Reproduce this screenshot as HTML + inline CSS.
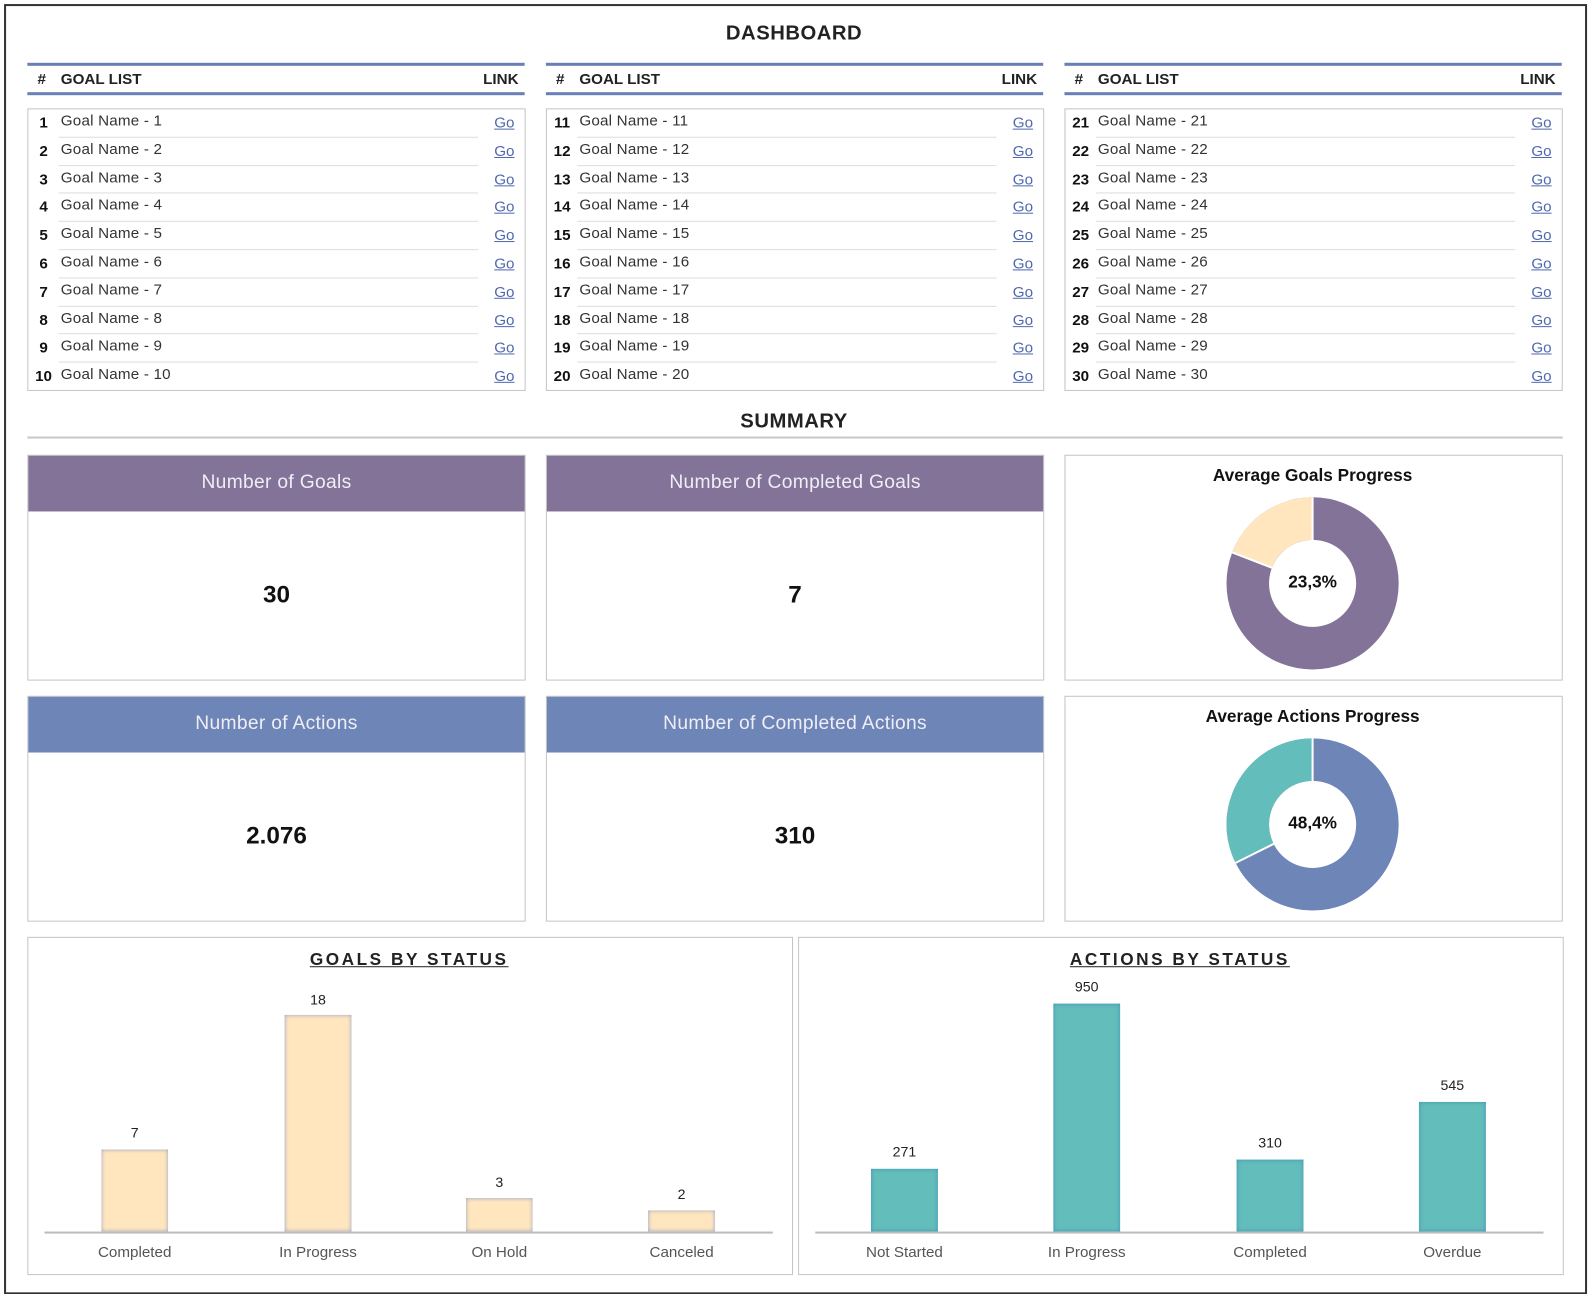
<!DOCTYPE html>
<html><head><meta charset="utf-8">
<style>
html,body{margin:0;padding:0;width:1588px;height:1294px;overflow:hidden;background:#fff;}
#w{position:absolute;left:0;top:0;width:1568px;height:1278px;transform:scale(1.0128);transform-origin:0 0;font-family:"Liberation Sans",sans-serif;color:#222;}
.a{position:absolute;}
.frame{left:4px;top:4px;width:1559px;height:1270px;border:2px solid #333;}
.title{font-weight:bold;font-size:20px;text-align:center;letter-spacing:0.5px;}
.hdr{height:26px;border-top:3px solid #6a7fb5;border-bottom:3px solid #6a7fb5;font-weight:bold;font-size:15px;}
.hdr span{position:absolute;top:5px;}
.tbl{border:1px solid #c4c4c4;height:277px;}
.row{position:absolute;left:0;right:0;height:27.8px;font-size:15px;color:#333;}
.row .n{position:absolute;left:4px;width:22px;text-align:center;font-weight:bold;top:5px;color:#111;}
.row .g{position:absolute;left:32px;top:3px;letter-spacing:0.2px;}
.row .l{position:absolute;right:10px;top:5px;color:#5068b0;text-decoration:underline;}
.row .s{position:absolute;left:30px;right:46px;bottom:0;border-bottom:1px solid #ddd;}
.card{border:1px solid #c4c4c4;height:221px;}
.ch{position:absolute;left:0;right:0;top:0;height:55px;color:#f0eef5;font-size:19px;text-align:center;line-height:54px;letter-spacing:0.3px;}
.cv{position:absolute;left:0;right:0;top:124px;text-align:center;font-weight:bold;font-size:24px;color:#111;}
.box{border:1px solid #c4c4c4;}
.bt{font-weight:bold;font-size:17px;letter-spacing:2.5px;text-decoration:underline;text-align:center;}
.bar{position:absolute;width:66px;box-shadow:inset 0 0 4px #8a9cc8;}
.v{position:absolute;width:80px;text-align:center;font-size:14px;color:#222;}
.x{position:absolute;width:140px;text-align:center;font-size:15px;color:#555;}
</style></head><body><div id="w">
<div class="a frame"></div>
<div class="a title" style="left:0;width:1568px;top:22px;">DASHBOARD</div>

<!-- headers -->
<div class="a hdr" style="left:27px;width:491px;top:62px;"><span style="left:10px">#</span><span style="left:33px">GOAL LIST</span><span style="right:6px">LINK</span></div>
<div class="a hdr" style="left:539px;width:491px;top:62px;"><span style="left:10px">#</span><span style="left:33px">GOAL LIST</span><span style="right:6px">LINK</span></div>
<div class="a hdr" style="left:1051px;width:491px;top:62px;"><span style="left:10px">#</span><span style="left:33px">GOAL LIST</span><span style="right:6px">LINK</span></div>

<div class="a tbl" style="left:27px;width:490px;top:107px;">
<div class="row" style="top:0"><span class="n">1</span><span class="g">Goal Name - 1</span><span class="l">Go</span><span class="s"></span></div>
<div class="row" style="top:27.8px"><span class="n">2</span><span class="g">Goal Name - 2</span><span class="l">Go</span><span class="s"></span></div>
<div class="row" style="top:55.6px"><span class="n">3</span><span class="g">Goal Name - 3</span><span class="l">Go</span><span class="s"></span></div>
<div class="row" style="top:83.4px"><span class="n">4</span><span class="g">Goal Name - 4</span><span class="l">Go</span><span class="s"></span></div>
<div class="row" style="top:111.2px"><span class="n">5</span><span class="g">Goal Name - 5</span><span class="l">Go</span><span class="s"></span></div>
<div class="row" style="top:139px"><span class="n">6</span><span class="g">Goal Name - 6</span><span class="l">Go</span><span class="s"></span></div>
<div class="row" style="top:166.8px"><span class="n">7</span><span class="g">Goal Name - 7</span><span class="l">Go</span><span class="s"></span></div>
<div class="row" style="top:194.6px"><span class="n">8</span><span class="g">Goal Name - 8</span><span class="l">Go</span><span class="s"></span></div>
<div class="row" style="top:222.4px"><span class="n">9</span><span class="g">Goal Name - 9</span><span class="l">Go</span><span class="s"></span></div>
<div class="row" style="top:250.2px"><span class="n">10</span><span class="g">Goal Name - 10</span><span class="l">Go</span></div>
</div>
<div class="a tbl" style="left:539px;width:490px;top:107px;">
<div class="row" style="top:0"><span class="n">11</span><span class="g">Goal Name - 11</span><span class="l">Go</span><span class="s"></span></div>
<div class="row" style="top:27.8px"><span class="n">12</span><span class="g">Goal Name - 12</span><span class="l">Go</span><span class="s"></span></div>
<div class="row" style="top:55.6px"><span class="n">13</span><span class="g">Goal Name - 13</span><span class="l">Go</span><span class="s"></span></div>
<div class="row" style="top:83.4px"><span class="n">14</span><span class="g">Goal Name - 14</span><span class="l">Go</span><span class="s"></span></div>
<div class="row" style="top:111.2px"><span class="n">15</span><span class="g">Goal Name - 15</span><span class="l">Go</span><span class="s"></span></div>
<div class="row" style="top:139px"><span class="n">16</span><span class="g">Goal Name - 16</span><span class="l">Go</span><span class="s"></span></div>
<div class="row" style="top:166.8px"><span class="n">17</span><span class="g">Goal Name - 17</span><span class="l">Go</span><span class="s"></span></div>
<div class="row" style="top:194.6px"><span class="n">18</span><span class="g">Goal Name - 18</span><span class="l">Go</span><span class="s"></span></div>
<div class="row" style="top:222.4px"><span class="n">19</span><span class="g">Goal Name - 19</span><span class="l">Go</span><span class="s"></span></div>
<div class="row" style="top:250.2px"><span class="n">20</span><span class="g">Goal Name - 20</span><span class="l">Go</span></div>
</div>
<div class="a tbl" style="left:1051px;width:490px;top:107px;">
<div class="row" style="top:0"><span class="n">21</span><span class="g">Goal Name - 21</span><span class="l">Go</span><span class="s"></span></div>
<div class="row" style="top:27.8px"><span class="n">22</span><span class="g">Goal Name - 22</span><span class="l">Go</span><span class="s"></span></div>
<div class="row" style="top:55.6px"><span class="n">23</span><span class="g">Goal Name - 23</span><span class="l">Go</span><span class="s"></span></div>
<div class="row" style="top:83.4px"><span class="n">24</span><span class="g">Goal Name - 24</span><span class="l">Go</span><span class="s"></span></div>
<div class="row" style="top:111.2px"><span class="n">25</span><span class="g">Goal Name - 25</span><span class="l">Go</span><span class="s"></span></div>
<div class="row" style="top:139px"><span class="n">26</span><span class="g">Goal Name - 26</span><span class="l">Go</span><span class="s"></span></div>
<div class="row" style="top:166.8px"><span class="n">27</span><span class="g">Goal Name - 27</span><span class="l">Go</span><span class="s"></span></div>
<div class="row" style="top:194.6px"><span class="n">28</span><span class="g">Goal Name - 28</span><span class="l">Go</span><span class="s"></span></div>
<div class="row" style="top:222.4px"><span class="n">29</span><span class="g">Goal Name - 29</span><span class="l">Go</span><span class="s"></span></div>
<div class="row" style="top:250.2px"><span class="n">30</span><span class="g">Goal Name - 30</span><span class="l">Go</span></div>
</div>

<div class="a title" style="left:0;width:1568px;top:405px;">SUMMARY</div>
<div class="a" style="left:27px;width:1516px;top:431px;border-top:2px solid #c8c8c8;"></div>

<div class="a card" style="left:27px;width:490px;top:449px;"><div class="ch" style="background:#837399">Number of Goals</div><div class="cv">30</div></div>
<div class="a card" style="left:539px;width:490px;top:449px;"><div class="ch" style="background:#837399">Number of Completed Goals</div><div class="cv">7</div></div>
<div class="a card" style="left:27px;width:490px;top:687px;"><div class="ch" style="background:#6e85b7">Number of Actions</div><div class="cv">2.076</div></div>
<div class="a card" style="left:539px;width:490px;top:687px;"><div class="ch" style="background:#6e85b7">Number of Completed Actions</div><div class="cv">310</div></div>
<div class="a box" style="left:1051px;width:490px;top:449px;height:221px;"></div>
<div class="a box" style="left:1051px;width:490px;top:687px;height:221px;"></div>
<div class="a" style="left:1051px;width:490px;top:460px;text-align:center;font-weight:bold;font-size:17px;color:#111;">Average Goals Progress</div>
<div class="a" style="left:1051px;width:490px;top:698px;text-align:center;font-weight:bold;font-size:17px;color:#111;">Average Actions Progress</div>
<svg class="a" style="left:0;top:0" width="1568" height="1278">
<circle cx="1296" cy="576" r="64" fill="none" stroke="#837399" stroke-width="42"/>
<circle cx="1296" cy="576" r="64" fill="none" stroke="#ffe6bf" stroke-width="42" stroke-dasharray="77.1 500" transform="rotate(-159 1296 576)"/>
<line x1="1296" y1="491" x2="1296" y2="534" stroke="#fff" stroke-width="2"/>
<line x1="1216.6" y1="545.5" x2="1256" y2="560.6" stroke="#fff" stroke-width="2"/>
<circle cx="1296" cy="814" r="64" fill="none" stroke="#6e85b7" stroke-width="42"/>
<circle cx="1296" cy="814" r="64" fill="none" stroke="#63bdba" stroke-width="42" stroke-dasharray="130.7 500" transform="rotate(-207 1296 814)"/>
<line x1="1296" y1="729" x2="1296" y2="772" stroke="#fff" stroke-width="2"/>
<line x1="1220" y1="852" x2="1258" y2="833" stroke="#fff" stroke-width="2"/>
<text x="1296" y="580" text-anchor="middle" font-family="Liberation Sans" font-weight="bold" font-size="17" fill="#111">23,3%</text>
<text x="1296" y="818" text-anchor="middle" font-family="Liberation Sans" font-weight="bold" font-size="17" fill="#111">48,4%</text>
</svg>

<!-- bottom charts -->
<div class="a box" style="left:27px;width:754px;top:925px;height:332px;"></div>
<div class="a box" style="left:788px;width:754px;top:925px;height:332px;"></div>
<div class="a bt" style="left:27px;width:754px;top:938px;">GOALS BY STATUS</div>
<div class="a bt" style="left:788px;width:968px;top:938px;width:754px;">ACTIONS BY STATUS</div>

<div class="a" style="left:44px;width:719px;top:1216px;border-top:2px solid #bbb;"></div>
<div class="a" style="left:805px;width:719px;top:1216px;border-top:2px solid #bbb;"></div>

<div class="bar" style="left:100px;top:1135px;height:81px;background:#ffe6bf"></div>
<div class="bar" style="left:281px;top:1002px;height:214px;background:#ffe6bf"></div>
<div class="bar" style="left:460px;top:1183px;height:33px;background:#ffe6bf"></div>
<div class="bar" style="left:640px;top:1195px;height:21px;background:#ffe6bf"></div>
<div class="v" style="left:93px;top:1110px">7</div>
<div class="v" style="left:274px;top:979px">18</div>
<div class="v" style="left:453px;top:1159px">3</div>
<div class="v" style="left:633px;top:1171px">2</div>
<div class="x" style="left:63px;top:1228px">Completed</div>
<div class="x" style="left:244px;top:1228px">In Progress</div>
<div class="x" style="left:423px;top:1228px">On Hold</div>
<div class="x" style="left:603px;top:1228px">Canceled</div>

<div class="bar" style="left:860px;top:1154px;height:62px;background:#63bdba;box-shadow:inset 0 0 4px #3f8fb8"></div>
<div class="bar" style="left:1040px;top:991px;height:225px;background:#63bdba;box-shadow:inset 0 0 4px #3f8fb8"></div>
<div class="bar" style="left:1221px;top:1145px;height:71px;background:#63bdba;box-shadow:inset 0 0 4px #3f8fb8"></div>
<div class="bar" style="left:1401px;top:1088px;height:128px;background:#63bdba;box-shadow:inset 0 0 4px #3f8fb8"></div>
<div class="v" style="left:853px;top:1129px">271</div>
<div class="v" style="left:1033px;top:966px">950</div>
<div class="v" style="left:1214px;top:1120px">310</div>
<div class="v" style="left:1394px;top:1063px">545</div>
<div class="x" style="left:823px;top:1228px">Not Started</div>
<div class="x" style="left:1003px;top:1228px">In Progress</div>
<div class="x" style="left:1184px;top:1228px">Completed</div>
<div class="x" style="left:1364px;top:1228px">Overdue</div>
</div></body></html>
